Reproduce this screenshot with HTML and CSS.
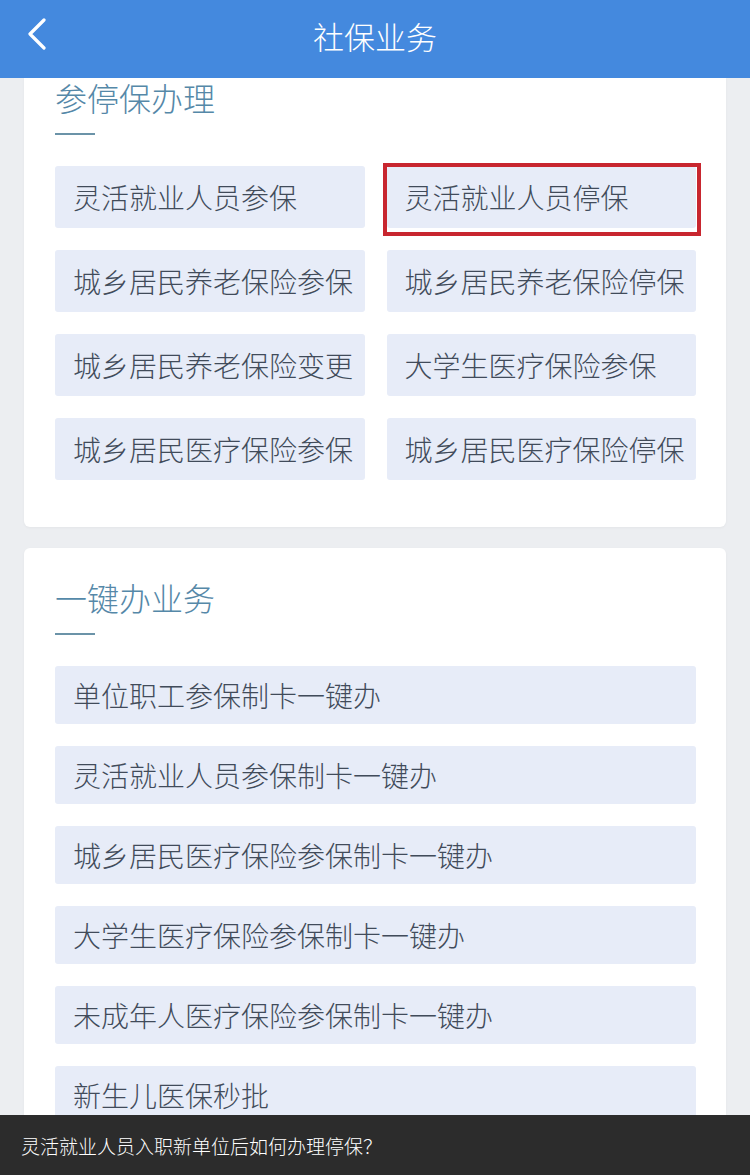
FILE: index.html
```html
<!DOCTYPE html>
<html lang="zh-CN">
<head>
  <meta charset="UTF-8">
  <meta name="viewport" content="width=device-width, initial-scale=1.0">
  <title>社保业务</title>
  <link rel="stylesheet" href="styles.css">
</head>
<body>
  <header class="topbar">
    <span class="back">
      <svg width="22" height="32" viewBox="0 0 22 32"><polyline points="18,2 4,16 18,30" fill="none" stroke="#fff" stroke-width="3.2" stroke-linecap="round" stroke-linejoin="round"/></svg>
    </span>
    <h1>社保业务</h1>
  </header>

  <main class="content">
    <section class="card card-scrolled">
      <h2 class="card-title">参停保办理</h2>
      <div class="title-line"></div>
      <div class="grid">
        <div class="item">灵活就业人员参保</div>
        <div class="item item-marked">灵活就业人员停保</div>
        <div class="item">城乡居民养老保险参保</div>
        <div class="item">城乡居民养老保险停保</div>
        <div class="item">城乡居民养老保险变更</div>
        <div class="item">大学生医疗保险参保</div>
        <div class="item">城乡居民医疗保险参保</div>
        <div class="item">城乡居民医疗保险停保</div>
      </div>
    </section>

    <section class="card">
      <h2 class="card-title">一键办业务</h2>
      <div class="title-line"></div>
      <div class="list">
        <div class="item row">单位职工参保制卡一键办</div>
        <div class="item row">灵活就业人员参保制卡一键办</div>
        <div class="item row">城乡居民医疗保险参保制卡一键办</div>
        <div class="item row">大学生医疗保险参保制卡一键办</div>
        <div class="item row">未成年人医疗保险参保制卡一键办</div>
        <div class="item row">新生儿医保秒批</div>
      </div>
    </section>
  </main>

  <div class="caption">灵活就业人员入职新单位后如何办理停保？</div>
</body>
</html>
```

FILE: styles.css
```css
body {
  margin: 0;
  height: 1175px;
  overflow: hidden;
  background-color: #eceef1;
  font-family: "Noto Sans CJK SC", "Noto Sans", sans-serif;
  font-weight: 300;
  color: #414b5a;
}
.topbar {
  position: relative;
  height: 78px;
  background-color: #4489de;
  display: flex;
  align-items: center;
  justify-content: center;
  z-index: 2;
}
.topbar h1 {
  margin: 0;
  font-size: 31px;
  font-weight: 300;
  color: #fff;
  line-height: 1;
  margin-top: -8px;
}
.back {
  position: absolute;
  left: 26px;
  top: 18px;
}
.content {
  padding: 0 24px;
}
.card {
  background-color: #fff;
  border-radius: 6px;
  padding: 30px 30px 47px 31px;
  margin-bottom: 21px;
  box-shadow: 0 1px 3px rgba(0, 0, 0, 0.04);
}
.card-scrolled {
  padding-top: 0;
  border-radius: 0 0 6px 6px;
}
.card-title {
  margin: 0;
  font-size: 32px;
  line-height: 38px;
  font-weight: 300;
  color: #5588a8;
}
.title-line {
  width: 40px;
  height: 2px;
  background-color: #6b93a8;
  margin: 17px 0 31px;
}
.grid {
  display: grid;
  grid-template-columns: 1fr 1fr;
  gap: 22px;
}
.item {
  position: relative;
  height: 62px;
  display: flex;
  align-items: center;
  padding-left: 18px;
  background-color: #e7ecf8;
  border-radius: 3px;
  font-size: 28px;
  white-space: nowrap;
}
.item-marked::after {
  content: "";
  position: absolute;
  top: -3px;
  left: -4px;
  right: -5px;
  bottom: -8px;
  border: 4px solid #c8262f;
}
.list {
  display: flex;
  flex-direction: column;
  gap: 22px;
}
.row {
  height: 58px;
}
.caption {
  position: fixed;
  left: 0;
  right: 0;
  bottom: 0;
  height: 60px;
  background-color: #2c2c2c;
  color: #fff;
  font-size: 19px;
  display: flex;
  align-items: center;
  padding-left: 21px;
  z-index: 3;
}
```
